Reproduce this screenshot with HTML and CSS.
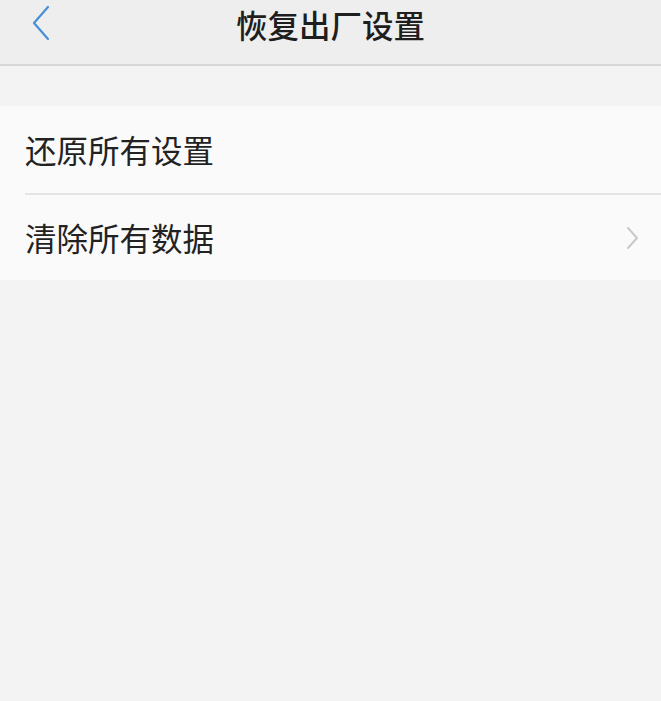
FILE: index.html
```html
<!DOCTYPE html>
<html lang="zh-CN">
  <head>
    <meta charset="UTF-8" />
    <meta name="viewport" content="width=device-width, initial-scale=1.0" />
    <title>恢复出厂设置</title>
    <link rel="stylesheet" href="styles.css">
  </head>
  <body>
    <div class="page">
      <header class="top-bar">
        <a class="back" href="#">
          <svg width="20" height="36" viewBox="0 0 20 36">
            <path d="M17 2 L3 18 L17 34" fill="none" stroke="#4a8fd6" stroke-width="2.2" stroke-linecap="round" stroke-linejoin="round" />
          </svg>
        </a>
        <h1>恢复出厂设置</h1>
      </header>

      <ul class="settings-list">
        <li class="settings-item">
          <span>还原所有设置</span>
        </li>
        <li class="settings-item">
          <span>清除所有数据</span>
          <svg class="arrow" width="14" height="24" viewBox="0 0 14 24">
            <path d="M3 2 L12 12 L3 22" fill="none" stroke="#c9c9c9" stroke-width="2" stroke-linecap="round" stroke-linejoin="round" />
          </svg>
        </li>
      </ul>
    </div>
  </body>
</html>
```

FILE: styles.css
```css
/* Reset */
* {
  margin: 0;
  padding: 0;
  box-sizing: border-box;
}

body {
  font-family: "Noto Sans CJK SC", "Noto Sans", sans-serif;
  background: #f3f3f3;
  color: #222;
  min-height: 100vh;
}

.page {
  width: 100%;
}

/* Top bar */
.top-bar {
  position: relative;
  height: 66px;
  padding-top: 5px;
  background: #eeeeee;
  border-bottom: 2px solid #d6d6d6;
  display: flex;
  align-items: flex-start;
  justify-content: center;
}

.top-bar h1 {
  font-size: 31.5px;
  font-weight: 500;
  color: #1e1e1e;
  line-height: 38px;
}

.back {
  position: absolute;
  left: 31px;
  top: 5px;
  display: block;
}

/* Settings list */
.settings-list {
  list-style: none;
  margin-top: 40px;
  background: #fafafa;
}

.settings-item {
  height: 87px;
  margin-left: 25px;
  padding-right: 22px;
  display: flex;
  align-items: center;
  justify-content: space-between;
  font-size: 31.5px;
  color: #222;
}

.settings-item + .settings-item {
  border-top: 2px solid #e4e4e4;
}

.settings-item span {
  margin-top: -2px;
}
```
